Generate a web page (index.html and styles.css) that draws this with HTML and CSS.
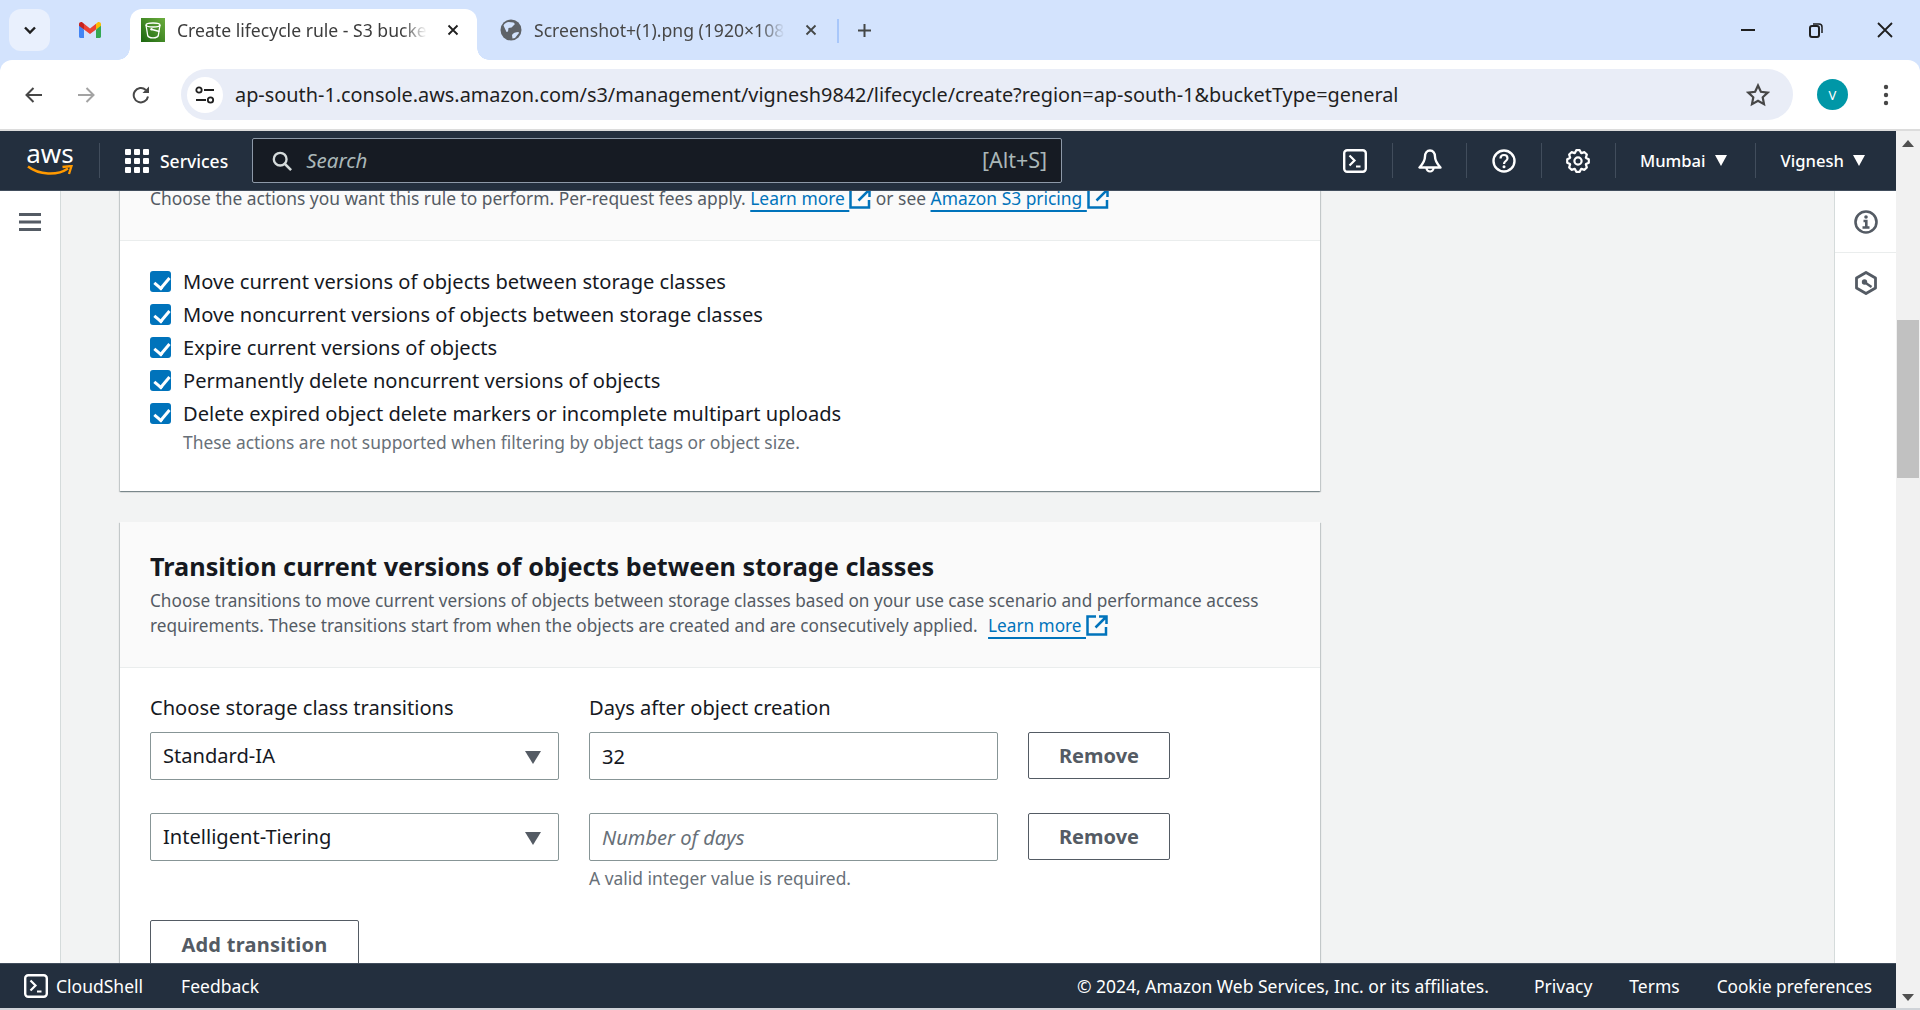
FILE: index.html
```html
<!DOCTYPE html>
<html lang="en">
<head>
<meta charset="utf-8">
<title>Create lifecycle rule - S3 bucket</title>
<link rel="stylesheet" href="styles.css">
</head>
<body>
<div class="tabstrip">
  <div class="tab-search"><svg width="14" height="9" viewBox="0 0 14 9"><path d="M2 1.500l5 5 5-5" fill="none" stroke="#1f1f1f" stroke-width="2.400"/></svg></div>
  <div class="pinned">
    <svg width="22" height="16" viewBox="0 0 22 16"><path d="M0 2.200v12.300c0 .8.7 1.500 1.500 1.500H5V7.500z" fill="#4285f4"/><path d="M17 16h3.500c.8 0 1.500-.7 1.500-1.500V2.200l-5 5.300z" fill="#34a853"/><path d="M5 7.500V1.800L11 6.500 17 1.800V7.500L11 12z" fill="#ea4335"/><path d="M17 1.800V7.500l5-3.700V2.200C22 .4 19.900-.6 18.500.5z" fill="#fbbc04"/><path d="M0 2.200v1.600L5 7.500V1.800L3.500.5C2.100-.6 0 .4 0 2.200z" fill="#c5221f"/></svg>
  </div>
  <div class="tab tab-active">
    <svg class="favicon" width="24" height="24" viewBox="0 0 24 24"><defs><linearGradient id="s3g" x1="0" y1="1" x2="1" y2="0"><stop offset="0" stop-color="#1b660f"/><stop offset="1" stop-color="#6cae3e"/></linearGradient></defs><rect width="24" height="24" fill="url(#s3g)"/><ellipse cx="12" cy="7" rx="7" ry="2" fill="none" stroke="#fff" stroke-width="1.300"/><path d="M5 7l1.700 10.500c.3 1.500 2.600 2.300 5.300 2.300s5-.8 5.300-2.300L19 7" fill="none" stroke="#fff" stroke-width="1.300"/><path d="M11 11.500l7.500 2" stroke="#fff" stroke-width="1.300"/><circle cx="10.500" cy="11.300" r="1.200" fill="#fff"/></svg>
    <span class="tab-title">Create lifecycle rule - S3 bucket</span>
    <svg class="tab-close" width="12" height="12" viewBox="0 0 12 12"><path d="M1.500 1.500l9 9m0-9l-9 9" stroke="#1f1f1f" stroke-width="1.800"/></svg>
  </div>
  <div class="tab tab-other">
    <svg class="globe" width="22" height="22" viewBox="0 0 22 22"><circle cx="11" cy="11" r="10.500" fill="#5f6368"/><path d="M3.500 6.500c1-2 3.500-3.500 5-3.500l5 .5 1.500 1.500-3.500 3.500-3 .5-.5 3.500-1.500.5zM12 16c1-2 3.500-3 6.500-3l.5 1-4 5-2.500.5z" fill="#d3e3fd"/></svg>
    <span class="tab-title">Screenshot+(1).png (1920×1080)</span>
    <svg class="tab-close" width="12" height="12" viewBox="0 0 12 12"><path d="M1.500 1.500l9 9m0-9l-9 9" stroke="#444746" stroke-width="1.800"/></svg>
  </div>
  <span class="tab-sep"></span>
  <svg class="tab-plus" width="15" height="15" viewBox="0 0 15 15"><path d="M7.500 1v13M1 7.500h13" stroke="#444746" stroke-width="2"/></svg>
  <div class="win-controls">
    <svg width="14" height="2" viewBox="0 0 14 2"><path d="M0 1h14" stroke="#1f1f1f" stroke-width="2"/></svg>
    <svg width="14" height="15" viewBox="0 0 14 15"><rect x="1" y="3" width="9" height="11" rx="2" fill="none" stroke="#1f1f1f" stroke-width="2"/><path d="M4 1h6c2 0 3 1 3 3v6" fill="none" stroke="#1f1f1f" stroke-width="1.500"/></svg>
    <svg width="16" height="16" viewBox="0 0 16 16"><path d="M1 1l14 14m0-14L1 15" stroke="#1f1f1f" stroke-width="1.800"/></svg>
  </div>
</div>

<div class="toolbar">
  <svg width="18" height="18" viewBox="0 0 18 18"><path d="M18 9H2.500M9.500 2L2.500 9l7 7" fill="none" stroke="#474747" stroke-width="2"/></svg>
  <svg width="18" height="18" viewBox="0 0 18 18"><path d="M0 9h15.500M8.500 2l7 7-7 7" fill="none" stroke="#a3a3a3" stroke-width="2"/></svg>
  <svg width="18" height="18" viewBox="0 0 18 18"><path d="M16 10.500A7.200 7.200 0 1 1 13.800 3.900" fill="none" stroke="#474747" stroke-width="2"/><path d="M10.500 7h6.500V.5z" fill="#474747"/></svg>
  <div class="omnibox">
    <div class="site-info"><svg width="20" height="18" viewBox="0 0 20 18"><circle cx="4" cy="4" r="2.700" fill="none" stroke="#1f1f1f" stroke-width="1.800"/><path d="M9 4h10M1 14h10" stroke="#1f1f1f" stroke-width="2"/><circle cx="15.500" cy="14" r="2.700" fill="none" stroke="#1f1f1f" stroke-width="1.800"/></svg></div>
    <span class="url">ap-south-1.console.aws.amazon.com/s3/management/vignesh9842/lifecycle/create?region=ap-south-1&amp;bucketType=general</span>
    <svg class="star" width="24" height="24" viewBox="0 0 24 24"><path d="M12 2.500l2.900 6.300 6.800.8-5 4.700 1.300 6.800-6-3.400-6 3.400 1.300-6.800-5-4.700 6.800-.8z" fill="none" stroke="#474747" stroke-width="2.200"/></svg>
  </div>
  <div class="avatar">V</div>
  <svg class="kebab" width="6" height="22" viewBox="0 0 6 22"><circle cx="3" cy="3" r="2.200" fill="#474747"/><circle cx="3" cy="11" r="2.200" fill="#474747"/><circle cx="3" cy="19" r="2.200" fill="#474747"/></svg>
</div>

<div class="viewport">
  <div class="page">
    <header class="awsnav">
      <div class="logo">
        <span class="logo-text">aws</span>
        <svg width="46" height="12" viewBox="0 0 46 12"><path d="M1 1.500C12 10 30 11 41 3.500" fill="none" stroke="#ff9900" stroke-width="2.500"/><path d="M35.500 2L44.500 1 42 9" fill="none" stroke="#ff9900" stroke-width="2.300"/></svg>
      </div>
      <span class="nav-sep nav-sep-logo"></span>
      <svg class="grid-icon" width="24" height="24" viewBox="0 0 24 24" fill="#fff"><rect width="6" height="6" rx="1"/><rect x="9" width="6" height="6" rx="1"/><rect x="18" width="6" height="6" rx="1"/><rect y="9" width="6" height="6" rx="1"/><rect x="9" y="9" width="6" height="6" rx="1"/><rect x="18" y="9" width="6" height="6" rx="1"/><rect y="18" width="6" height="6" rx="1"/><rect x="9" y="18" width="6" height="6" rx="1"/><rect x="18" y="18" width="6" height="6" rx="1"/></svg>
      <span class="services">Services</span>
      <div class="search">
        <svg width="20" height="20" viewBox="0 0 22 22"><circle cx="9" cy="9" r="7" fill="none" stroke="#d5dbdb" stroke-width="2.600"/><path d="M14 14l7 7" stroke="#d5dbdb" stroke-width="2.800"/></svg>
        <span class="search-text">Search</span>
        <span class="search-key">[Alt+S]</span>
      </div>
      <svg class="nav-icon first-icon" width="24" height="24" viewBox="0 0 24 24"><rect x="1.200" y="1.200" width="21.600" height="21.600" rx="3" fill="none" stroke="#fff" stroke-width="2.400"/><path d="M6.500 6.500l5 5-5 5M13 17.500h4.500" fill="none" stroke="#fff" stroke-width="2.200"/></svg>
      <span class="nav-sep"></span>
      <svg class="nav-icon" width="24" height="24" viewBox="0 0 24 24"><path d="M12 1.500c-3 0-5 2.500-5 6 0 3.500-2.200 7.500-5.500 11h21c-3.300-3.500-5.500-7.500-5.500-11 0-3.500-2-6-5-6z" fill="none" stroke="#fff" stroke-width="2.400" stroke-linejoin="round"/><path d="M8.500 19a3.500 3.500 0 0 0 7 0" fill="none" stroke="#fff" stroke-width="2.200"/></svg>
      <span class="nav-sep"></span>
      <svg class="nav-icon" width="24" height="24" viewBox="0 0 24 24"><circle cx="12" cy="12" r="10.500" fill="none" stroke="#fff" stroke-width="2.400"/><path d="M8.500 9.500c0-2.200 1.500-3.500 3.500-3.500s3.500 1.300 3.500 3.200c0 2.800-3.500 2.800-3.500 5.800" fill="none" stroke="#fff" stroke-width="2.200"/><circle cx="12" cy="17.700" r="1.500" fill="#fff"/></svg>
      <span class="nav-sep"></span>
      <svg class="nav-icon" width="24" height="24" viewBox="0 0 24 24"><polygon points="13.700,1.200 15.100,4 15.460,4.150 18.430,3.160 20.840,5.570 19.850,8.540 20,8.900 22.800,10.300 22.800,13.700 20,15.100 19.850,15.460 20.840,18.430 18.430,20.840 15.460,19.850 15.100,20 13.700,22.800 10.300,22.800 8.900,20 8.540,19.850 5.570,20.840 3.160,18.430 4.150,15.460 4,15.100 1.200,13.700 1.200,10.300 4,8.900 4.150,8.540 3.160,5.570 5.570,3.160 8.540,4.150 8.900,4 10.300,1.200" fill="none" stroke="#fff" stroke-width="2.200" stroke-linejoin="round"/><circle cx="12" cy="12" r="3.600" fill="none" stroke="#fff" stroke-width="2.200"/></svg>
      <span class="nav-sep nav-sep-gear"></span>
      <span class="nav-menu">Mumbai<i class="caret"></i></span>
      <span class="nav-sep nav-sep-menu"></span>
      <span class="nav-menu">Vignesh<i class="caret"></i></span>
    </header>

    <div class="main">
      <aside class="sidenav">
        <svg width="22" height="18" viewBox="0 0 22 18"><path d="M0 1.500h22M0 9h22M0 16.500h22" stroke="#545b64" stroke-width="3"/></svg>
      </aside>
      <main class="content">
        <section class="card card-first">
          <div class="card-head head-first">
            <p class="desc">Choose the actions you want this rule to perform. Per-request fees apply. <a class="link">Learn more&nbsp;</a><svg class="ext" width="22" height="21" viewBox="0 0 22 21"><path d="M10 1.500H1.500v18h18.500V12M13 1.500h7.500V9M20 2L9.500 12.500" fill="none" stroke="#0073bb" stroke-width="2.500"/></svg> or see <a class="link">Amazon S3 pricing&nbsp;</a><svg class="ext" width="22" height="21" viewBox="0 0 22 21"><path d="M10 1.500H1.500v18h18.500V12M13 1.500h7.500V9M20 2L9.500 12.500" fill="none" stroke="#0073bb" stroke-width="2.500"/></svg></p>
          </div>
          <div class="card-body checks">
            <label class="check"><i class="box"></i>Move current versions of objects between storage classes</label>
            <label class="check"><i class="box"></i>Move noncurrent versions of objects between storage classes</label>
            <label class="check"><i class="box"></i>Expire current versions of objects</label>
            <label class="check"><i class="box"></i>Permanently delete noncurrent versions of objects</label>
            <label class="check"><i class="box"></i>Delete expired object delete markers or incomplete multipart uploads</label>
            <p class="hint check-hint">These actions are not supported when filtering by object tags or object size.</p>
          </div>
        </section>

        <section class="card">
          <div class="card-head head-second">
            <h2>Transition current versions of objects between storage classes</h2>
            <p class="desc">Choose transitions to move current versions of objects between storage classes based on your use case scenario and performance access requirements. These transitions start from when the objects are created and are consecutively applied. <a class="link link-shift">Learn more&nbsp;</a><svg class="ext" width="22" height="21" viewBox="0 0 22 21"><path d="M10 1.500H1.500v18h18.500V12M13 1.500h7.500V9M20 2L9.500 12.500" fill="none" stroke="#0073bb" stroke-width="2.500"/></svg></p>
          </div>
          <div class="card-body form">
            <div class="labels">
              <span class="field-label">Choose storage class transitions</span>
              <span class="field-label">Days after object creation</span>
            </div>
            <div class="row">
              <div class="field field-select">Standard-IA<i class="select-caret"></i></div>
              <div class="field">32</div>
              <button class="btn btn-remove">Remove</button>
            </div>
            <div class="row row-second">
              <div class="field field-select">Intelligent-Tiering<i class="select-caret"></i></div>
              <div class="field placeholder">Number of days</div>
              <button class="btn btn-remove">Remove</button>
            </div>
            <p class="hint valid-hint">A valid integer value is required.</p>
            <button class="btn btn-add">Add transition</button>
          </div>
        </section>
      </main>
      <aside class="rail">
        <div class="rail-item"><svg width="24" height="24" viewBox="0 0 24 24"><circle cx="12" cy="12" r="10.500" fill="none" stroke="#545b64" stroke-width="2.600"/><path d="M9.500 11h2.800v6.500M8.500 17.500h7" fill="none" stroke="#545b64" stroke-width="2.600"/><circle cx="12" cy="7" r="1.800" fill="#545b64"/></svg></div>
        <div class="rail-item"><svg width="24" height="24" viewBox="0 0 24 24"><path d="M12 1.500l9.500 5.500v10L12 22.500 2.500 17V7z" fill="none" stroke="#545b64" stroke-width="2.800" stroke-linejoin="round"/><circle cx="10.500" cy="11" r="2.700" fill="#545b64"/><path d="M11 11.500l6.500 4.500" stroke="#545b64" stroke-width="2.400"/></svg></div>
      </aside>
    </div>

    <footer class="awsfoot">
      <svg width="24" height="24" viewBox="0 0 24 24"><rect x="1.200" y="1.200" width="21.600" height="21.600" rx="3" fill="none" stroke="#fff" stroke-width="2.400"/><path d="M6.500 6.500l5 5-5 5M13 17.500h4.500" fill="none" stroke="#fff" stroke-width="2.200"/></svg>
      <span class="foot-shell">CloudShell</span>
      <span class="foot-feedback">Feedback</span>
      <span class="foot-copy">© 2024, Amazon Web Services, Inc. or its affiliates.</span>
      <span class="foot-link">Privacy</span>
      <span class="foot-link">Terms</span>
      <span class="foot-link">Cookie preferences</span>
    </footer>
  </div>
  <div class="scrollbar">
    <i class="arrow-up"></i>
    <div class="track"><div class="thumb"></div></div>
    <i class="arrow-down"></i>
  </div>
</div>
<div class="bottom-edge"></div>
</body>
</html>
```

FILE: styles.css
```css
* { box-sizing: border-box; }
html, body { margin: 0; height: 100%; overflow: hidden; }
body {
  display: flex;
  flex-direction: column;
  width: 1920px;
  height: 1010px;
  font-family: "Noto Sans", "Open Sans", sans-serif;
  color: #16191f;
  background: #d3e3fd;
}
p, h2 { margin: 0; }

/* Browser chrome */
.tabstrip {
  flex: 0 0 60px;
  display: flex;
  align-items: flex-start;
  background: #d3e3fd;
  padding: 9px 0 0 9px;
}
.tab-search {
  width: 41px;
  height: 42px;
  border-radius: 12px;
  background: #e9f0fd;
  display: flex;
  align-items: center;
  justify-content: center;
}
.pinned { width: 80px; height: 42px; display: flex; align-items: center; justify-content: center; }
.tab {
  width: 347px;
  height: 51px;
  display: flex;
  align-items: center;
  font-size: 17.600px;
  color: #474747;
  padding-bottom: 9px;
}
.tab-active {
  background: #fff;
  border-radius: 12px 12px 0 0;
  padding-left: 11px;
  color: #3c3c3c;
  position: relative;
}
.tab-active::before, .tab-active::after {
  content: "";
  position: absolute;
  bottom: 0;
  width: 12px;
  height: 12px;
  background: radial-gradient(circle at 0 0, #d3e3fd 11.500px, #fff 12px);
}
.tab-active::before { left: -12px; }
.tab-active::after { right: -12px; background: radial-gradient(circle at 100% 0, #d3e3fd 11.500px, #fff 12px); }
.tab-other { width: 361px; padding-left: 23px; }
.tab .tab-title {
  display: block;
  overflow: hidden;
  white-space: nowrap;
  margin-left: 12px;
  -webkit-mask-image: linear-gradient(90deg, #000 90%, transparent);
  mask-image: linear-gradient(90deg, #000 90%, transparent);
}
.tab-active .tab-title { width: 250px; }
.tab-other .tab-title { width: 251px; }
.tab-close { margin-left: 20px; flex: none; }
.globe, .favicon { flex: none; }
.tab-sep { width: 2px; height: 24px; background: #a8c7fa; margin: 10px 0 0 -1px; }
.tab-plus { margin: 14px 0 0 18px; }
.win-controls {
  margin-left: auto;
  display: flex;
  align-items: center;
  gap: 54px;
  padding: 0 27px 0 0;
  height: 42px;
}

.toolbar {
  flex: 0 0 69px;
  display: flex;
  align-items: center;
  background: #fff;
  border-radius: 12px 12px 0 0;
  padding-left: 24px;
  gap: 36px;
}
.omnibox {
  width: 1612px;
  height: 51px;
  margin-left: -5px;
  border-radius: 26px;
  background: #e9edf7;
  display: flex;
  align-items: center;
  padding-left: 6px;
}
.site-info {
  width: 36px;
  height: 36px;
  border-radius: 50%;
  background: #fff;
  display: flex;
  align-items: center;
  justify-content: center;
}
.url { font-size: 19.880px; color: #1f1f1f; margin-left: 12px; white-space: nowrap; }
.star { margin-left: auto; margin-right: 23px; }
.avatar {
  width: 31px;
  height: 31px;
  border-radius: 50%;
  background: #0097a7;
  color: #fff;
  font-size: 13px;
  display: flex;
  align-items: center;
  justify-content: center;
  margin-left: -12px;
}
.kebab { margin-left: -1px; }

.viewport { flex: 1; min-height: 0; display: flex; background: #fff; border-top: 2px solid #dcdcdc; }
.page { width: 1896px; display: flex; flex-direction: column; min-height: 0; }

/* AWS nav */
.awsnav {
  flex: 0 0 60px;
  display: flex;
  align-items: center;
  background: #232f3e;
  color: #fff;
  padding-left: 27px;
  border-bottom: 1px solid #414d5c;
}
.logo { width: 46px; display: flex; flex-direction: column; align-items: center; margin-top: -3px; }
.logo-text { font-size: 26px; line-height: 22px; font-weight: 400; height: 23px; }
.nav-sep { width: 1px; height: 35px; background: #414d5c; margin: 0 24.700px; flex: none; }
.nav-sep-logo { margin: 0 25px 0 26px; }
.nav-sep-gear { margin-right: 24px; }
.grid-icon { flex: none; }
.services { font-size: 17.500px; margin-left: 11px; font-weight: 500; }
.search {
  width: 810px;
  height: 45px;
  margin-left: 24px;
  display: flex;
  align-items: center;
  background: #161b23;
  border: 1px solid #8d99a8;
  border-radius: 2px;
  padding: 0 14px 0 19px;
}
.search-text { font-size: 20.500px; line-height: 26px; font-style: italic; color: #aab7b8; margin: 0 0 2px 14px; }
.search-key { font-size: 21.500px; line-height: 26px; color: #aab7b8; margin: 0 0 2px auto; }
.nav-icon { flex: none; }
.first-icon { margin-left: 281px; }
.nav-menu { font-size: 16.600px; display: flex; align-items: center; font-weight: 500; white-space: nowrap; }
.caret {
  width: 0;
  height: 0;
  margin-left: 9px;
  border-left: 6px solid transparent;
  border-right: 6px solid transparent;
  border-top: 11px solid #fff;
}
.nav-sep-menu { margin: 0 25px 0 28px; }

/* Main */
.main { flex: 1; min-height: 0; display: flex; background: #f2f3f3; overflow: hidden; }
.sidenav {
  flex: 0 0 61px;
  background: #fff;
  border-right: 1px solid #d5dbdb;
  padding: 22px 0 0 19px;
}
.content { width: 1773px; padding-left: 59px; }
.card {
  width: 1200px;
  background: #fff;
  box-shadow: 0 1px 1px 0 rgba(0,28,36,.3), 1px 1px 1px 0 rgba(0,28,36,.15), -1px 1px 1px 0 rgba(0,28,36,.15);
}
.card-first { margin-bottom: 31px; }
.card-head { background: #fafafa; border-bottom: 1px solid #eaeded; padding-left: 30px; padding-right: 30px; }
.head-first { height: 53px; }
.head-second { height: 146px; padding-top: 26px; }
.desc { font-size: 17.200px; line-height: 24px; color: #545b64; }
.head-first .desc { font-size: 17.400px; line-height: 20px; margin-top: -3px; white-space: nowrap; }
.head-second .desc { line-height: 24.500px; }
h2 { font-size: 25.250px; line-height: 36px; font-weight: 700; color: #16191f; margin-bottom: 5px; }
.link { color: #0073bb; text-decoration: underline; text-underline-offset: 5px; text-decoration-thickness: 2px; }
.link-shift { margin-left: 6px; }
.ext { vertical-align: -4px; }
.checks { padding: 24px 30px 0; height: 250px; }
.check { display: flex; align-items: center; height: 33px; font-size: 20.100px; color: #16191f; white-space: nowrap; }
.box {
  width: 21px;
  height: 21px;
  margin-right: 12px;
  border-radius: 3px;
  background: #0073bb;
  position: relative;
  flex: none;
}
.box::after {
  content: "";
  position: absolute;
  left: 7px;
  top: 3px;
  width: 7px;
  height: 12px;
  border: solid #fff;
  border-width: 0 3px 3px 0;
  transform: rotate(40deg);
}
.hint { font-size: 17.400px; line-height: 24px; color: #687078; }
.check-hint { margin-left: 33px; }
.form { padding: 25px 30px 0; }
.labels { display: flex; gap: 30px; height: 39px; }
.field-label { width: 409px; font-size: 20.100px; line-height: 30px; color: #16191f; }
.row { display: flex; gap: 30px; align-items: flex-start; }
.row-second { margin-top: 33px; }
.field {
  width: 409px;
  height: 48px;
  border: 1px solid #879596;
  border-radius: 2px;
  background: #fff;
  display: flex;
  align-items: center;
  padding: 0 12px;
  font-size: 20.100px;
  color: #16191f;
  position: relative;
}
.field-select { padding-bottom: 2px; }
.placeholder { font-style: italic; color: #687078; }
.select-caret {
  position: absolute;
  right: 17px;
  top: 18px;
  width: 0;
  height: 0;
  border-left: 8px solid transparent;
  border-right: 8px solid transparent;
  border-top: 13px solid #545b64;
}
.btn {
  font-family: inherit;
  font-size: 20px;
  font-weight: 700;
  color: #545b64;
  background: #fff;
  border: 1px solid #545b64;
  border-radius: 2px;
  padding: 0;
}
.btn-remove { width: 142px; height: 47px; }
.valid-hint { margin: 5px 0 0 439px; }
.btn-add { display: block; width: 209px; height: 48px; margin-top: 30px; letter-spacing: .25px; }

.rail { flex: 0 0 62px; background: #fff; border-left: 1px solid #d5dbdb; margin-left: auto; }
.rail-item { height: 62px; display: flex; align-items: center; justify-content: center; border-bottom: 1px solid #eaeded; }
.rail-item:last-child { border-bottom: 0; height: 60px; }

.awsfoot {
  flex: 0 0 45px;
  display: flex;
  align-items: center;
  background: #232f3e;
  color: #fff;
  font-size: 17.500px;
  padding-left: 24px;
  border-top: 1px solid #414d5c;
}
.foot-shell { margin-left: 8px; }
.foot-feedback { margin-left: 38px; }
.foot-copy { margin-left: auto; margin-right: 45px; }
.foot-link { margin-right: 37px; }
.foot-link:last-child { margin-right: 24px; font-size: 17.200px; }

/* Scrollbar */
.scrollbar { width: 24px; background: #f1f1f1; display: flex; flex-direction: column; align-items: center; padding: 0 1px; }
.arrow-up, .arrow-down { width: 0; height: 0; flex: none; border-left: 6px solid transparent; border-right: 6px solid transparent; }
.arrow-up { border-bottom: 7px solid #505050; margin: 9px 0 0; }
.arrow-down { border-top: 7px solid #505050; margin: 0 0 7px; }
.track { flex: 1; width: 100%; padding-top: 173px; }
.thumb { height: 158px; background: #c1c1c1; }
.bottom-edge { flex: 0 0 2px; background: #cfd3d8; }
```
